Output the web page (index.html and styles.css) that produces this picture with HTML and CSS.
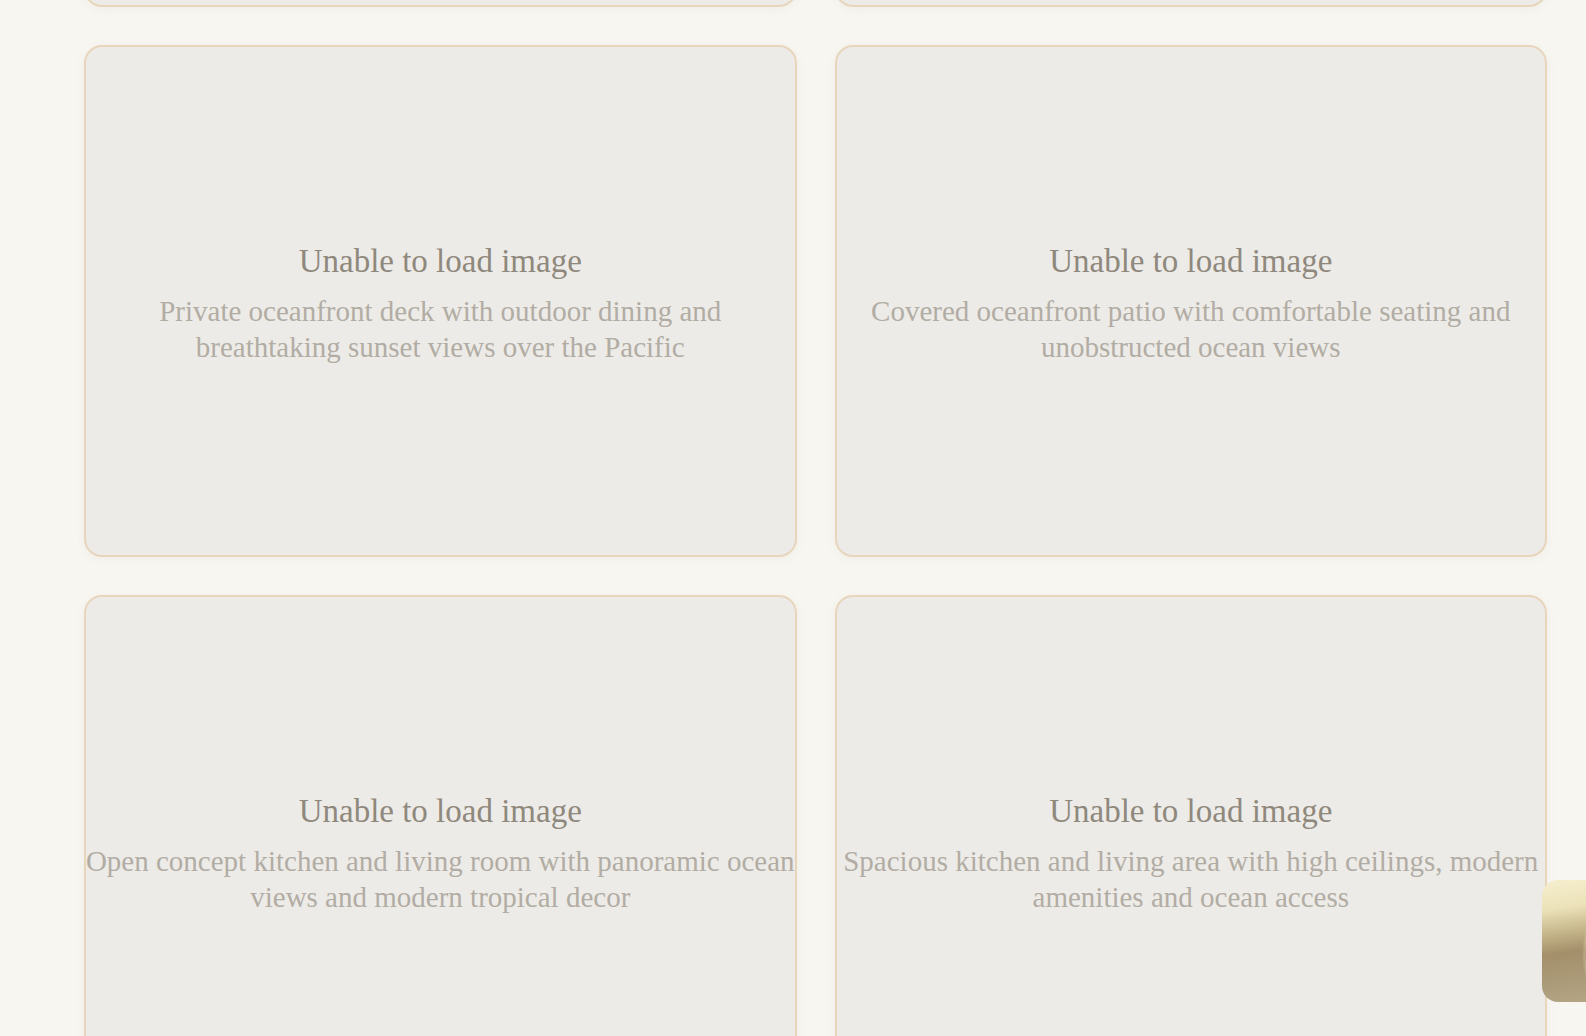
FILE: index.html
```html
<!DOCTYPE html>
<html lang="en">
<head>
<meta charset="utf-8">
<title>Gallery</title>
<link rel="stylesheet" href="styles.css">
</head>
<body>
<main class="gallery">
  <div class="card"></div>
  <div class="card"></div>
  <div class="card">
    <div class="fallback">
      <p class="fallback-title">Unable to load image</p>
      <p class="fallback-desc">Private oceanfront deck with outdoor dining and breathtaking sunset views over the Pacific</p>
    </div>
  </div>
  <div class="card">
    <div class="fallback">
      <p class="fallback-title">Unable to load image</p>
      <p class="fallback-desc">Covered oceanfront patio with comfortable seating and unobstructed ocean views</p>
    </div>
  </div>
  <div class="card">
    <div class="fallback">
      <p class="fallback-title">Unable to load image</p>
      <p class="fallback-desc">Open concept kitchen and living room with panoramic ocean views and modern tropical decor</p>
    </div>
  </div>
  <div class="card">
    <div class="fallback">
      <p class="fallback-title">Unable to load image</p>
      <p class="fallback-desc">Spacious kitchen and living area with high ceilings, modern amenities and ocean access</p>
    </div>
  </div>
</main>
<button class="float-tab" aria-label="Open"></button>
</body>
</html>
```

FILE: styles.css
```css
html, body {
  margin: 0;
  padding: 0;
  background: #f7f6f1;
  overflow: hidden;
}

body {
  font-family: "Liberation Serif", "Times New Roman", serif;
}

.gallery {
  display: grid;
  grid-template-columns: 1fr 1fr;
  gap: 38px;
  padding: 0 39px 0 84px;
  margin-top: -505px;
}

.card {
  height: 512px;
  box-sizing: border-box;
  border: 2px solid #e8d6bc;
  border-radius: 18px;
  background: #edebe7;
  box-shadow: 0 2px 10px rgba(120, 100, 70, 0.06);
  display: flex;
  align-items: center;
  justify-content: center;
}

.fallback {
  flex: none;
  text-align: center;
  width: calc(100% + 2px);
}

.fallback-title {
  margin: 0 0 8px;
  font-size: 33px;
  line-height: 48px;
  color: #8f887d;
}

.fallback-desc {
  margin: 0;
  font-size: 29px;
  line-height: 36px;
  color: #b2ada4;
}

.float-tab {
  position: fixed;
  left: 1542px;
  top: 880px;
  width: 110px;
  height: 122px;
  border: none;
  padding: 0;
  border-radius: 16px;
  overflow: hidden;
  background:
    radial-gradient(circle at 120% 60%, transparent 58%, rgba(255, 245, 215, 0.25) 59%, transparent 61%),
    radial-gradient(circle at 130% 70%, transparent 48%, rgba(255, 245, 215, 0.2) 49%, transparent 51%),
    linear-gradient(172deg, #f6efcf 0%, #ece2b9 22%, #c5b58a 40%, #a48f6a 55%, #ab9a78 75%, #b7a98a 100%);
}
```
